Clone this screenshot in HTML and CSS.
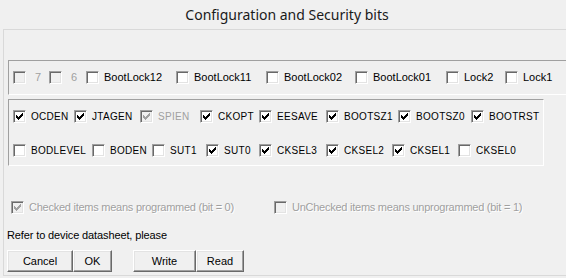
FILE: index.html
```html
<!DOCTYPE html>
<html>
<head>
<meta charset="utf-8">
<link rel="stylesheet" href="styles.css">
</head>
<body>
<div class="title">Configuration and Security bits</div>
<div class="frame">
  <div class="lockbox">
    <div class="item w36"><span class="cb dis"></span><span class="lbl dim bit">7</span></div>
    <div class="item w37"><span class="cb dis"></span><span class="lbl dim bit">6</span></div>
    <div class="item w90"><span class="cb"></span><span class="lbl">BootLock12</span></div>
    <div class="item w90"><span class="cb"></span><span class="lbl">BootLock11</span></div>
    <div class="item w89"><span class="cb"></span><span class="lbl">BootLock02</span></div>
    <div class="item w91"><span class="cb"></span><span class="lbl">BootLock01</span></div>
    <div class="item w59"><span class="cb"></span><span class="lbl">Lock2</span></div>
    <div class="item"><span class="cb"></span><span class="lbl">Lock1</span></div>
  </div>
  <div class="fusebox">
    <div class="row">
      <div class="item w61"><span class="cb on"></span><span class="lbl fl">OCDEN</span></div>
      <div class="item w66"><span class="cb on"></span><span class="lbl fl">JTAGEN</span></div>
      <div class="item w60"><span class="cb dis on"></span><span class="lbl fl dim">SPIEN</span></div>
      <div class="item w59"><span class="cb on"></span><span class="lbl fl">CKOPT</span></div>
      <div class="item w67"><span class="cb on"></span><span class="lbl fl">EESAVE</span></div>
      <div class="item w72"><span class="cb on"></span><span class="lbl fl">BOOTSZ1</span></div>
      <div class="item w73"><span class="cb on"></span><span class="lbl fl">BOOTSZ0</span></div>
      <div class="item"><span class="cb on"></span><span class="lbl fl">BOOTRST</span></div>
    </div>
    <div class="row">
      <div class="item w79"><span class="cb"></span><span class="lbl fl">BODLEVEL</span></div>
      <div class="item w60"><span class="cb"></span><span class="lbl fl">BODEN</span></div>
      <div class="item w54"><span class="cb"></span><span class="lbl fl">SUT1</span></div>
      <div class="item w53"><span class="cb on"></span><span class="lbl fl">SUT0</span></div>
      <div class="item w67"><span class="cb on"></span><span class="lbl fl">CKSEL3</span></div>
      <div class="item w66"><span class="cb on"></span><span class="lbl fl">CKSEL2</span></div>
      <div class="item w66"><span class="cb on"></span><span class="lbl fl">CKSEL1</span></div>
      <div class="item"><span class="cb"></span><span class="lbl fl">CKSEL0</span></div>
    </div>
  </div>
  <div class="legend">
    <div class="item w263"><span class="cb dis on"></span><span class="lbl dim emboss">Checked items means programmed (bit = 0)</span></div>
    <div class="item"><span class="cb dis"></span><span class="lbl dim emboss">UnChecked items means unprogrammed (bit = 1)</span></div>
  </div>
  <div class="note">Refer to device datasheet, please</div>
  <div class="btns">
    <button class="btn w66">Cancel</button>
    <button class="btn w39">OK</button>
    <button class="btn w63 gap">Write</button>
    <button class="btn w48">Read</button>
  </div>
</div>
</body>
</html>
```
FILE: styles.css
```css
* { box-sizing: border-box; }
html, body { margin: 0; }
body {
  width: 566px;
  height: 278px;
  overflow: hidden;
  background: #f0f0f0;
  font: 11px "Liberation Sans", Arial, sans-serif;
  color: #000;
}
.title {
  height: 29px;
  display: flex;
  align-items: center;
  justify-content: center;
  padding-left: 8px;
  font: 14px "Noto Sans", sans-serif;
  color: #1a1a1a;
}
.frame {
  margin-left: 3px;
  width: 563px;
  border: 1px solid #d9d9d9;
  border-right: none;
  padding: 30px 0 3px 4px;
}
.lockbox {
  display: flex;
  align-items: center;
  overflow: hidden;
  border-top: 1px solid #a0a0a0;
  border-left: 1px solid #a0a0a0;
  border-bottom: 1px solid #fff;
  padding: 10px 0 10px 4px;
}
.fusebox {
  margin-top: 4px;
  width: 536px;
  border: 1px solid;
  border-color: #a0a0a0 #fff #fff #a0a0a0;
  padding: 10px 0 8px 4px;
  display: flex;
  flex-direction: column;
  gap: 21px;
}
.row { display: flex; align-items: center; height: 13px; }
.item { display: flex; align-items: center; flex: none; height: 13px; }
.cb {
  position: relative;
  flex: none;
  width: 13px;
  height: 13px;
  border: 1px solid;
  border-color: #a0a0a0 #fff #fff #a0a0a0;
  box-shadow: inset 1px 1px #696969, inset -1px -1px #e3e3e3;
  background: #fff;
  color: #000;
}
.cb.dis { background: #f0f0f0; color: #a0a0a0; }
.cb.on::after {
  content: "";
  position: absolute;
  left: 2px;
  top: 4px;
  width: 1px;
  height: 3px;
  background: currentColor;
  box-shadow: 1px 1px, 2px 2px, 3px 1px, 4px 0, 5px -1px, 6px -2px;
}
.lbl { margin-left: 5px; line-height: 13px; white-space: nowrap; }
.lbl.bit { margin-left: 9px; }
.fl { font-size: 10px; letter-spacing: 0.3px; }
.dim { color: #a0a0a0; }
.emboss { text-shadow: 1px 1px #fff; letter-spacing: -0.25px; }
.legend { display: flex; margin-top: 35px; padding-left: 3px; height: 13px; }
.note { margin-top: 15px; margin-left: -1px; line-height: 13px; letter-spacing: -0.12px; }
.btns { display: flex; margin-top: 8px; margin-left: -1px; }
.btn {
  height: 22px;
  padding: 0;
  font: 11px "Liberation Sans", Arial, sans-serif;
  color: #000;
  background: #f0f0f0;
  border: 1px solid;
  border-color: #fff #696969 #696969 #fff;
  box-shadow: inset -1px -1px #a0a0a0, inset 1px 1px #e3e3e3;
  border-radius: 0;
}
.btn.gap { margin-left: 21px; }
.w36 { width: 36px; } .w37 { width: 37px; } .w39 { width: 39px; }
.w48 { width: 48px; } .w53 { width: 53px; } .w54 { width: 54px; }
.w59 { width: 59px; } .w60 { width: 60px; } .w61 { width: 61px; }
.w63 { width: 63px; } .w66 { width: 66px; } .w67 { width: 67px; }
.w72 { width: 72px; } .w73 { width: 73px; } .w79 { width: 79px; }
.w89 { width: 89px; } .w90 { width: 90px; } .w91 { width: 91px; }
.w263 { width: 263px; }
```
